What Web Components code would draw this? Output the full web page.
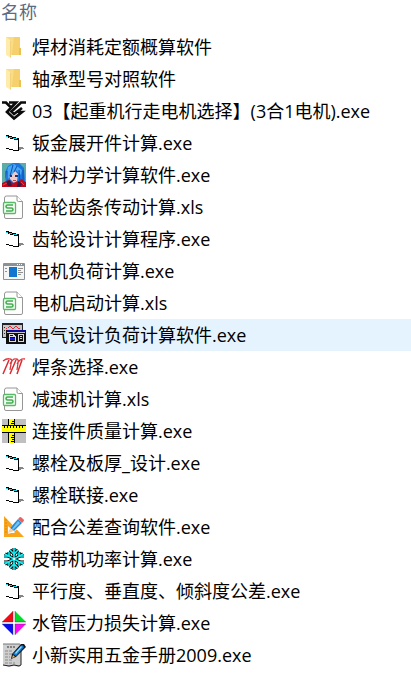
<!DOCTYPE html>
<html lang="zh-CN">
<head>
<meta charset="utf-8">
<meta name="viewport" content="width=device-width, initial-scale=1">
<title>名称</title>
<style>
    body {
        margin: 0;
        background-color: #fff;
        font-family: "Open Sans", "Noto Sans CJK SC", sans-serif;
    }
</style>
</head>
<body>
<file-list>
    <span slot="heading">名称</span>
    <file-row icon="folder">焊材消耗定额概算软件</file-row>
    <file-row icon="folder">轴承型号对照软件</file-row>
    <file-row icon="crane">03【起重机行走电机选择】(3合1电机).exe</file-row>
    <file-row icon="form">钣金展开件计算.exe</file-row>
    <file-row icon="portrait">材料力学计算软件.exe</file-row>
    <file-row icon="sheet">齿轮齿条传动计算.xls</file-row>
    <file-row icon="form">齿轮设计计算程序.exe</file-row>
    <file-row icon="window">电机负荷计算.exe</file-row>
    <file-row icon="sheet">电机启动计算.xls</file-row>
    <file-row icon="panels" selected>电气设计负荷计算软件.exe</file-row>
    <file-row icon="weld">焊条选择.exe</file-row>
    <file-row icon="sheet">减速机计算.xls</file-row>
    <file-row icon="ruler">连接件质量计算.exe</file-row>
    <file-row icon="form">螺栓及板厚_设计.exe</file-row>
    <file-row icon="form">螺栓联接.exe</file-row>
    <file-row icon="drafting">配合公差查询软件.exe</file-row>
    <file-row icon="snow">皮带机功率计算.exe</file-row>
    <file-row icon="form">平行度、垂直度、倾斜度公差.exe</file-row>
    <file-row icon="diamond">水管压力损失计算.exe</file-row>
    <file-row icon="notepad">小新实用五金手册2009.exe</file-row>
</file-list>

<script>
const ICONS = {
    folder: `
        <path d="M4 2h14v11h1v7H5z" fill="#f9dc83"/>
        <path d="M12 2h6v11h1v7h-9z" fill="#f5d06c"/>
        <path d="M17 13h2v7h-2z" fill="#eac154"/>
        <path d="M4 2l4 3 1 2v16l-5-3z" fill="#ffecad"/>
        <path d="M8.500 6v16.500" stroke="#edc966" stroke-width=".7"/>`,
    crane: `
        <path d="M0 3.500h4l5 5M7 3.500h7L5 13l7 6.500 8-6.500h-4M24 3.500h-5L9.500 12.500l2.500 2.500 8-6" fill="none" stroke="#0b0b0b" stroke-width="2.700"/>`,
    form: `
        <g shape-rendering="crispEdges">
            <path d="M4 4h3v1h3v1h4v1h3v2h-5V8H8V7H6V6H4z" fill="#000"/>
            <path d="M4 5h2v1H4zM7 6h3v1H7zM11 7h4v1h-4z" fill="#13d9e5"/>
            <path d="M16 8h1v12h-1zM4 17h3v1H4zM7 18h4v1H7zM11 19h6v1h-6z" fill="#000"/>
            <path d="M17 16h4v1h1v1h-3v1h-2z" fill="#858585"/>
        </g>`,
    portrait: `
        <path d="M0 0h24v24H0z" fill="#5aada8"/>
        <path d="M3 21V9l3-6 5-3h6l5 5 1 13-4 4z" fill="#1976df"/>
        <path d="M7 10l5-3 4 4-1 7-3 2-4-4z" fill="#efc8c8"/>
        <path d="M6 4l6-3 8 6-1 5-5-5-4 5-3 3-4 4z" fill="#46a7f6"/>
        <path d="M11 2L8 13M15 3l-3 6M17 7l1 12M5 8v10M21 7v11" stroke="#124da8" stroke-width="1" fill="none"/>
        <path d="M8 12h2v2H8zM13 12h3v2h-3z" fill="#273467"/>
        <path d="M11 17h3v1h-3z" fill="#b34657"/>
        <path d="M0 20l7-3 4 3 6-2 2-2 5 3v5H0z" fill="#b80b1e"/>
        <path d="M4 19l4-2 2 6H6zM16 18l4 3-2 3h-3z" fill="#381b42"/>
        <path d="M1 22l4-2M19 19l3 3" stroke="#ff3540"/>`,
    sheet: `
        <path d="M4.500 1h10.500l5.500 5.500V22q0 1.500-1.500 1.500H4q-1.500 0-1.500-1.500V3q0-2 2-2z" fill="#fdfdfd" stroke="#969696"/>
        <path d="M15 1v4q0 1.500 1.500 1.500h4" fill="#fff" stroke="#969696"/>
        <rect x="1.500" y="7.500" width="12" height="11" rx="1" fill="#f6fff6" stroke="#5bb866" stroke-width="1.300"/>
        <path d="M11 10H5.500q-1.500 0-1.500 1.500T5.500 13h4q1.500 0 1.500 1.500T9.500 16H4" fill="none" stroke="#43ad50" stroke-width="1.600"/>`,
    window: `
        <path d="M1.500 4.500h21v16h-21z" fill="#f5f5f5" stroke="#8b9297"/>
        <path d="M2 5h20v2H2z" fill="#8b9297"/>
        <path d="M15 5.500h1m1 0h1m1 0h1" stroke="#fff"/>
        <path d="M7 8h8v10H7z" fill="#1275d0"/>
        <path d="M3 9.500h2m-2 3h2M16 9.500h5m-5 2h3m-3 2h5m-5 2h3" stroke="#919191"/>`,
    panels: `
        <g shape-rendering="crispEdges">
            <path d="M0 0h21v15H0z" fill="#222"/>
            <path d="M1 2h19v12H1z" fill="#c6c6c6"/>
            <path d="M2 4h1v1H2zM2 7h1v1H2zM2 10h1v1H2z" fill="#333"/>
            <path d="M4 5h1v1H4zM6 4h1v1H6zM7 3h2v1H7zM9 4h1v1H9zM10 5h2v1h-2zM12 4h1v1h-1zM13 3h2v1h-2zM15 4h1v1h-1zM16 5h2v1h-2z" fill="#e12b3d"/>
            <path d="M4 7h20v14H4z" fill="#111"/>
            <path d="M5 7h18v2H5z" fill="#0b0ba0"/>
            <path d="M5 9h18v1H5z" fill="#c7c7c7"/>
            <path d="M7 11h1v8H7zM8 11h4v1H8zM11 12h2v1h-2zM7 13h6v1H7zM7 18h7v1H7zM13 13h1v6h-1z" fill="#ddd"/>
            <path d="M8 15h5v2H8z" fill="#1014ed"/>
            <path d="M16 11h6v1h-6zM16 12h1v7h-1zM21 12h1v7h-1zM17 18h4v1h-4zM18 13h2v1h-2zM18 15h2v1h-2z" fill="#ddd"/>
        </g>`,
    weld: `
        <path d="M1 19L7 5M8 19l6-14M15 19l5-14" fill="none" stroke="#d92c33" stroke-width="1.500"/>
        <path d="M1 6q4-3 7-2 3 0 1 5L8 15M8 9q3-6 6-5 3 0 2 4l-1 7M15 9q3-6 8-5" fill="none" stroke="#de363c" stroke-width="1.300"/>`,
    ruler: `
        <g shape-rendering="crispEdges">
            <path d="M0 0h24v24H0z" fill="#c0c0c0"/>
            <path d="M6 0h7v24H6z" fill="#000"/>
            <path d="M7 0h5v24H7z" fill="#ff0"/>
            <path d="M10 2h2v1h-2zM9 4h3v1H9zM10 16h2v1h-2zM9 18h3v1H9zM10 20h2v1h-2zM9 22h3v1H9z" fill="#000"/>
            <path d="M0 6h24v8H0z" fill="#000"/>
            <path d="M0 7h24v6H0z" fill="#ff0"/>
            <path d="M2 7h1v2H2zM5 7h1v2H5zM8 7h1v2H8zM11 7h1v2h-1zM14 7h1v2h-1zM17 7h1v2h-1zM20 7h1v2h-1z" fill="#000"/>
        </g>`,
    drafting: `
        <path d="M2 1l20 21H2z" fill="#f8a51c"/>
        <path d="M6 11l7 7H6z" fill="#fff"/>
        <path d="M3 5h2M3 8h2M3 11h2M3 14h2M3 17h2" stroke="#d77c12" stroke-width=".7"/>
        <path d="M17 2l5 5L12 17l-6 2 2-6z" fill="#fff"/>
        <path d="M16 4l4 4-8 8-4-3z" fill="#278bd3"/>
        <path d="M16 6l2 2-7 7-1-1z" fill="#73c4ef"/>
        <path d="M17 3q1-2 3 0l1 1q2 1 0 3l-1 1-4-4z" fill="#e86460"/>
        <path d="M8 13l4 3-6 2z" fill="#f6cfa2"/>`,
    snow: `
        <g fill="none" stroke="#000" stroke-width="3.200">
            <path d="M12 1v22M3 7l18 10M21 7L3 17"/>
            <path d="M8 3l4 4 4-4M8 21l4-4 4 4M7 5v4H2M17 5v4h5M7 19v-4H2M17 19v-4h5"/>
        </g>
        <g fill="none" stroke="#18f0f4" stroke-width="1.600">
            <path d="M12 1v22M3 7l18 10M21 7L3 17"/>
            <path d="M8 3l4 4 4-4M8 21l4-4 4 4M7 5v4H2M17 5v4h5M7 19v-4H2M17 19v-4h5"/>
        </g>
        <path d="M11 11h2v2h-2z" fill="#fff"/>`,
    diamond: `
        <path d="M11 0v11H0z" fill="#f00b19"/>
        <path d="M13 0l11 11H13z" fill="#00dc27"/>
        <path d="M0 13h11v11z" fill="#090cf5"/>
        <path d="M13 13h11L13 24z" fill="#f90cf5"/>
        <path d="M11 0v11H0M13 0v11h11M0 13h11v11M24 13H13v11" fill="none" stroke="#333" stroke-width=".4"/>`,
    notepad: `
        <path d="M1 1h18v21l-2 2-5-1-5 1-6-2z" fill="#cfcfcf"/>
        <path d="M19 8v14l-2 1-5-1-5 1-6-1" fill="none" stroke="#202020" stroke-width="1"/>
        <path d="M1 1h17" stroke="#777"/>
        <path d="M5 4h8" stroke="#333" stroke-dasharray="2 1"/>
        <path d="M3 8h8M3 11h7M3 14h5M3 17h7M3 20h10" stroke="#8a8a8a" stroke-dasharray="3 1"/>
        <path d="M19 1h3l2 3-10 10-5 2 1-5z" fill="#101820"/>
        <path d="M20 2l2 2-8 9-3-2z" fill="#137ed4"/>
        <path d="M19 3l1 1-6 7-1-1z" fill="#8bdfff"/>
        <path d="M11 12l2 2-3 1z" fill="#e8b763"/>`
};

class FileIcon extends HTMLElement {
    constructor() {
        super();
        this.attachShadow({ mode: "open" });
    }

    connectedCallback() {
        this.shadowRoot.innerHTML = `
        <style>
        :host {
            display: block;
            flex: none;
            width: 24px;
            height: 24px;
        }
        svg {
            display: block;
            width: 100%;
            height: 100%;
        }
        </style>
        <svg viewBox="0 0 24 24" aria-hidden="true">${ICONS[this.getAttribute("name")] || ""}</svg>
        `;
    }
}

class FileRow extends HTMLElement {
    constructor() {
        super();
        this.attachShadow({ mode: "open" });
    }

    connectedCallback() {
        this.setAttribute("role", "listitem");
        this.shadowRoot.innerHTML = `
        <style>
        :host {
            display: flex;
            align-items: center;
            gap: 6px;
            height: 32px;
            padding: 0 2px;
            box-sizing: border-box;
            font-size: 18px;
            line-height: 32px;
            color: #000;
            white-space: nowrap;
        }
        :host([selected]) {
            background-color: #e5f3ff;
        }
        </style>
        <file-icon name="${this.getAttribute("icon")}"></file-icon>
        <span><slot></slot></span>
        `;
    }
}

class FileList extends HTMLElement {
    constructor() {
        super();
        this.attachShadow({ mode: "open" });
    }

    connectedCallback() {
        this.shadowRoot.innerHTML = `
        <style>
        :host {
            display: block;
        }
        button {
            display: block;
            width: 100%;
            padding: 0 1px 7px;
            border: none;
            background: none;
            color: #5b6b84;
            font-family: inherit;
            font-size: 18px;
            line-height: 24px;
            text-align: left;
        }
        </style>
        <button type="button"><slot name="heading"></slot></button>
        <div role="list"><slot></slot></div>
        `;
    }
}

customElements.define("file-icon", FileIcon);
customElements.define("file-row", FileRow);
customElements.define("file-list", FileList);
</script>
</body>
</html>
